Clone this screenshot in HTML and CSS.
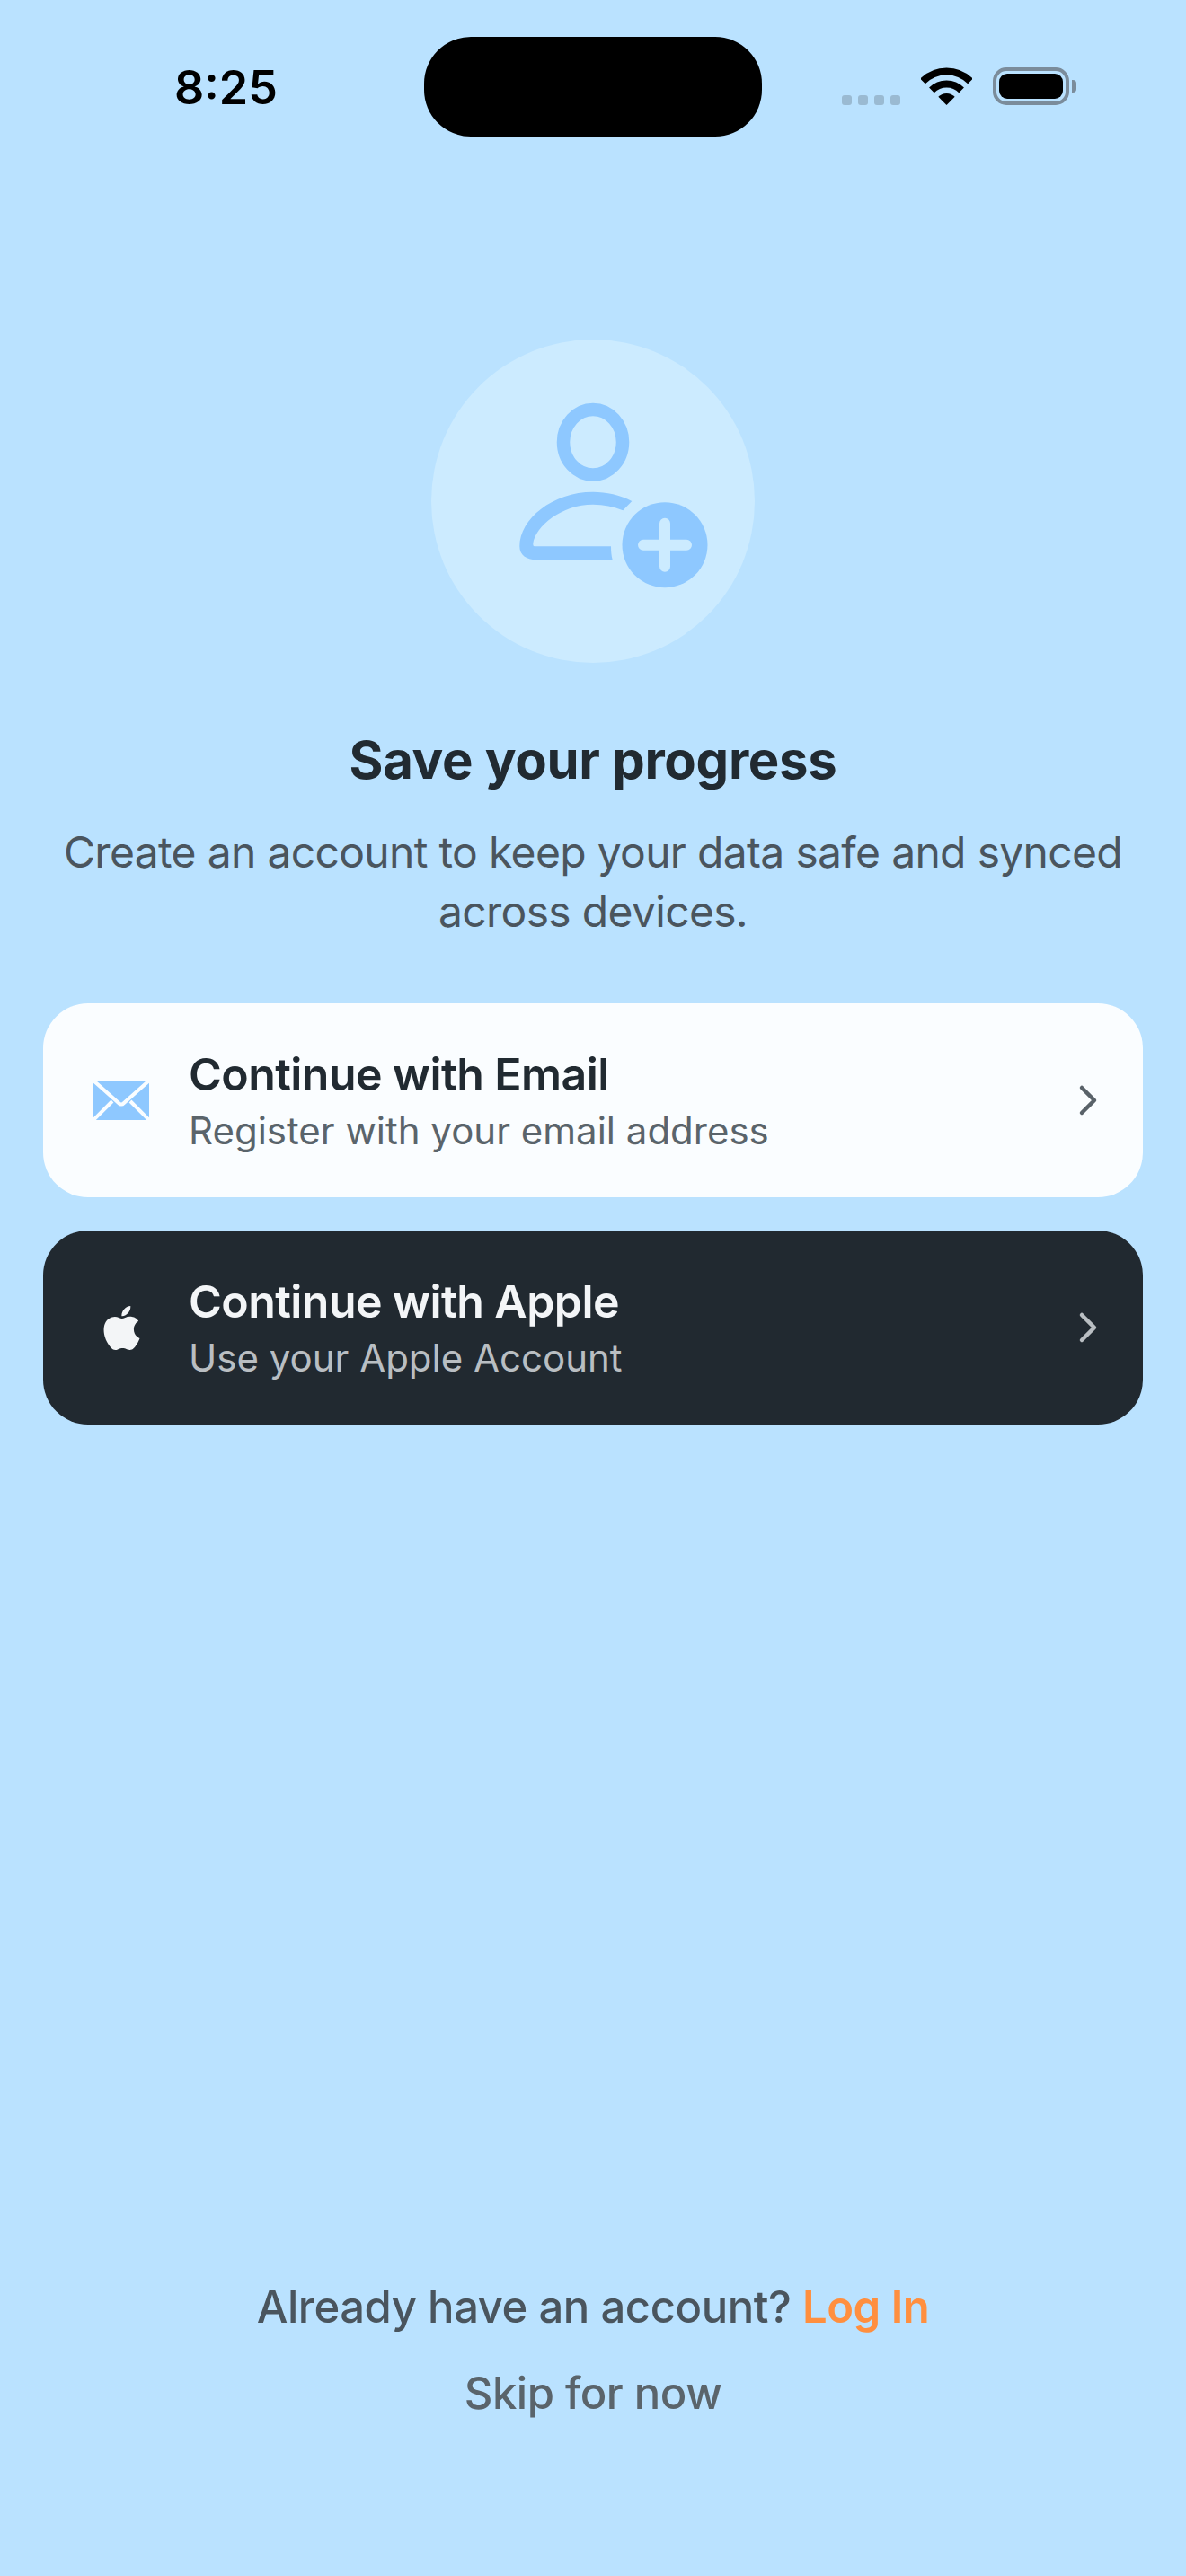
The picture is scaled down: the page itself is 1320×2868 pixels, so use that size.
FILE: index.html
```html
<!DOCTYPE html>
<html lang="en">
<head>
  <meta charset="UTF-8" />
  <meta name="viewport" content="width=device-width, initial-scale=1.0"/>
  <title>Save your progress</title>
  <link rel="stylesheet" href="styles.css">
</head>
<body>
  <div class="screen">
    <div class="status-bar">
      <div class="status-time">8:25</div>
      <div class="island"></div>
      <div class="status-icons">
        <div class="signal">
          <span class="signal-dot"></span>
          <span class="signal-dot"></span>
          <span class="signal-dot"></span>
          <span class="signal-dot"></span>
        </div>
        <svg class="wifi" width="57" height="42" viewBox="0 0 57 42">
          <path d="M2 15.5A37.5 37.5 0 0 1 55 15.5" fill="none" stroke="#000" stroke-width="8"/>
          <path d="M11.9 25.4A23.5 23.5 0 0 1 45.1 25.4" fill="none" stroke="#000" stroke-width="8"/>
          <path d="M28.5 42L19.3 32.8A13 13 0 0 1 37.7 32.8Z" fill="#000"/>
        </svg>
        <div class="battery">
          <div class="battery-body"><div class="battery-fill"></div></div>
          <div class="battery-tip"></div>
        </div>
      </div>
    </div>

    <div class="hero">
      <div class="hero-circle">
        <svg width="360" height="360" viewBox="0 0 360 360">
          <ellipse cx="180" cy="114.3" rx="33" ry="36.3" fill="none" stroke="#8EC8FF" stroke-width="14.5"/>
          <path d="M223.3 180C210 173 195 169.7 180 169.7C135 169.7 98.3 200 98.3 230.3C98.3 240 106 245.3 116.7 245.3H201.7C200.5 241 200 236 200 230.3H115C113.5 230.3 113.3 229 113.3 227C116 208 145 183.7 180 183.7C192 183.7 203 186 213.3 190.3Z" fill="#8EC8FF"/>
          <circle cx="260" cy="228.7" r="47.5" fill="#8EC8FF"/>
          <path d="M260 204.7V252.7M236 228.7H284" fill="none" stroke="#CCEBFF" stroke-width="12" stroke-linecap="round"/>
        </svg>
      </div>
      <h1 class="title">Save your progress</h1>
      <p class="subtitle">Create an account to keep your data safe and synced across devices.</p>
    </div>

    <div class="options">
      <div class="option option-light">
        <div class="option-icon">
          <svg width="62" height="44" viewBox="0 0 62 44">
            <rect width="62" height="44" rx="3" fill="#8EC8FF"/>
            <path d="M0 0L28 25Q31 28 34 25L62 0M0 44L21 23M62 44L41 23" fill="none" stroke="#FAFDFF" stroke-width="4"/>
          </svg>
        </div>
        <div class="option-text">
          <div class="option-title">Continue with Email</div>
          <div class="option-sub">Register with your email address</div>
        </div>
        <svg class="chevron" width="24" height="36" viewBox="0 0 24 36">
          <path d="M4 4L18 18L4 32" fill="none" stroke="#596269" stroke-width="4.5" stroke-linecap="round" stroke-linejoin="round"/>
        </svg>
      </div>

      <div class="option option-dark">
        <div class="option-icon">
          <svg width="49" height="49" viewBox="0 0 24 24">
            <path fill="#F3F5F7" d="M12.152 6.896c-.948 0-2.415-1.078-3.96-1.04-2.04.027-3.91 1.183-4.961 3.014-2.117 3.675-.546 9.103 1.519 12.09 1.013 1.454 2.208 3.09 3.792 3.039 1.52-.065 2.09-.987 3.935-.987 1.831 0 2.35.987 3.96.948 1.637-.026 2.676-1.48 3.676-2.948 1.156-1.688 1.636-3.325 1.662-3.415-.039-.013-3.182-1.221-3.22-4.857-.026-3.04 2.48-4.494 2.597-4.559-1.429-2.09-3.623-2.324-4.39-2.376-2-.156-3.675 1.09-4.61 1.09zM15.53 3.83c.843-1.012 1.4-2.427 1.245-3.83-1.207.052-2.662.805-3.532 1.818-.78.896-1.454 2.338-1.273 3.714 1.338.104 2.715-.688 3.559-1.701"/>
          </svg>
        </div>
        <div class="option-text">
          <div class="option-title">Continue with Apple</div>
          <div class="option-sub">Use your Apple Account</div>
        </div>
        <svg class="chevron" width="24" height="36" viewBox="0 0 24 36">
          <path d="M4 4L18 18L4 32" fill="none" stroke="#B9BEC2" stroke-width="4.5" stroke-linecap="round" stroke-linejoin="round"/>
        </svg>
      </div>
    </div>

    <div class="footer">
      <div class="login-line">Already have an account? <span class="login-link">Log In</span></div>
      <div class="skip">Skip for now</div>
    </div>
  </div>
</body>
</html>
```

FILE: styles.css
```css
* {
  margin: 0;
  padding: 0;
  box-sizing: border-box;
}

body {
  font-family: Inter, "Liberation Sans", sans-serif;
  background-color: #BAE2FF;
  color: #212A31;
}

.screen {
  display: flex;
  flex-direction: column;
  height: 2868px;
  width: 1320px;
  overflow: hidden;
}

/* status bar */
.status-bar {
  display: flex;
  align-items: flex-start;
  height: 378px;
  padding: 41px 0 0 194px;
}

.status-time {
  width: 278px;
  margin-top: 25px;
  font-size: 52px;
  line-height: 64px;
  font-weight: 600;
  color: #000;
}

.island {
  width: 376px;
  height: 111px;
  background-color: #000;
  border-radius: 52px;
}

.status-icons {
  display: flex;
  align-items: flex-end;
  margin: 34px 0 0 89px;
  height: 42px;
}

.signal {
  display: flex;
  gap: 7px;
  margin-right: 23px;
}

.signal-dot {
  width: 11px;
  height: 11px;
  border-radius: 3px;
  background-color: #9ABAD2;
}

.wifi {
  margin-right: 23px;
}

.battery {
  display: flex;
  align-items: center;
  gap: 3px;
  height: 42px;
}

.battery-body {
  width: 85px;
  height: 42px;
  padding: 3px;
  border: 4px solid #7B8C9B;
  border-radius: 15px;
}

.battery-fill {
  height: 100%;
  background-color: #000;
  border-radius: 9px;
}

.battery-tip {
  width: 5px;
  height: 14px;
  background-color: #7B8C9B;
  border-radius: 0 4px 4px 0;
}

/* hero */
.hero {
  display: flex;
  flex-direction: column;
  align-items: center;
  padding: 0 48px;
  text-align: center;
}

.hero-circle {
  width: 360px;
  height: 360px;
  border-radius: 50%;
  background-color: #CCEBFF;
  margin-bottom: 74px;
}

.title {
  font-size: 58px;
  line-height: 68px;
  letter-spacing: -0.3px;
  font-weight: 700;
  margin-bottom: 36px;
}

.subtitle {
  font-size: 48px;
  line-height: 66px;
  letter-spacing: -0.68px;
  color: #4A555E;
}

/* options */
.options {
  display: flex;
  flex-direction: column;
  gap: 37px;
  margin: 69px 48px 0;
}

.option {
  display: flex;
  align-items: center;
  height: 216px;
  padding: 0 48px 0 56px;
  border-radius: 50px;
}

.option-light {
  background-color: #FAFDFF;
}

.option-dark {
  background-color: #212930;
  color: #F3F5F7;
}

.option-icon {
  display: flex;
  align-items: center;
  justify-content: center;
  width: 62px;
  height: 62px;
  margin-right: 44px;
}

.option-text {
  flex: 1;
}

.option-title {
  font-size: 50px;
  line-height: 64px;
  letter-spacing: -0.55px;
  font-weight: 600;
}

.option-sub {
  margin-top: 3px;
  font-size: 42px;
  line-height: 56px;
  color: #5A646B;
}

.option-dark .option-sub {
  color: #B9BEC2;
}

/* footer */
.footer {
  margin-top: auto;
  padding-bottom: 171px;
  text-align: center;
}

.login-line {
  font-size: 49px;
  line-height: 64px;
  letter-spacing: -0.45px;
  font-weight: 450;
  color: #4A555E;
  margin-bottom: 32px;
}

.login-link {
  color: #FF8F3F;
  font-weight: 600;
}

.skip {
  font-size: 49px;
  line-height: 64px;
  letter-spacing: -0.5px;
  font-weight: 450;
  color: #5A646B;
}
```
